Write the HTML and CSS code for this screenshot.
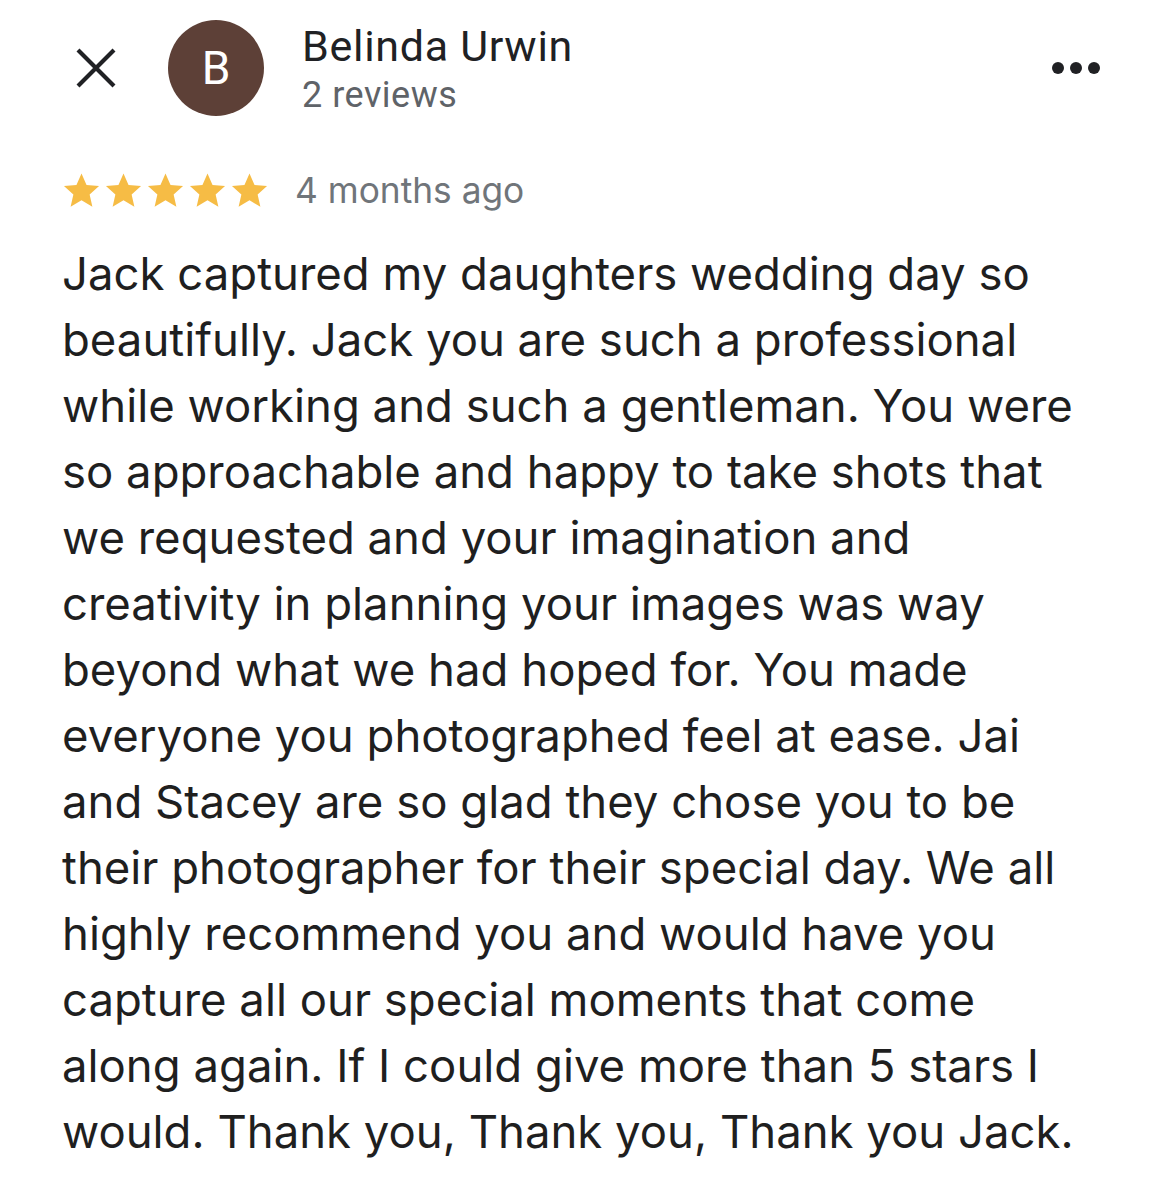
FILE: index.html
```html
<!DOCTYPE html>
<html>
<head>
<meta charset="utf-8">
<link rel="stylesheet" href="styles.css">
</head>
<body>
<div class="page">
  <header class="head">
    <div class="close">
      <svg width="44" height="44" viewBox="0 0 44 44"><path d="M4 4 L40 40 M40 4 L4 40" stroke="#202124" stroke-width="4.2" fill="none"/></svg>
    </div>
    <div class="avatar">B</div>
    <div class="who">
      <div class="name">Belinda Urwin</div>
      <div class="count">2 reviews</div>
    </div>
    <div class="more"><span></span><span></span><span></span></div>
  </header>
  <div class="meta">
    <div class="stars">
      <svg viewBox="0 0 24 24"><path d="M12 1.5l3.1 7.1 7.7.7-5.8 5.1 1.7 7.6L12 18l-6.7 4 1.7-7.6L1.2 9.3l7.7-.7z"/></svg>
      <svg viewBox="0 0 24 24"><path d="M12 1.5l3.1 7.1 7.7.7-5.8 5.1 1.7 7.6L12 18l-6.7 4 1.7-7.6L1.2 9.3l7.7-.7z"/></svg>
      <svg viewBox="0 0 24 24"><path d="M12 1.5l3.1 7.1 7.7.7-5.8 5.1 1.7 7.6L12 18l-6.7 4 1.7-7.6L1.2 9.3l7.7-.7z"/></svg>
      <svg viewBox="0 0 24 24"><path d="M12 1.5l3.1 7.1 7.7.7-5.8 5.1 1.7 7.6L12 18l-6.7 4 1.7-7.6L1.2 9.3l7.7-.7z"/></svg>
      <svg viewBox="0 0 24 24"><path d="M12 1.5l3.1 7.1 7.7.7-5.8 5.1 1.7 7.6L12 18l-6.7 4 1.7-7.6L1.2 9.3l7.7-.7z"/></svg>
    </div>
    <span class="ago">4 months ago</span>
  </div>
  <p class="text">Jack captured my daughters wedding day so<br>beautifully. Jack you are such a professional<br>while working and such a gentleman. You were<br>so approachable and happy to take shots that<br>we requested and your imagination and<br>creativity in planning your images was way<br>beyond what we had hoped for. You made<br>everyone you photographed feel at ease. Jai<br>and Stacey are so glad they chose you to be<br>their photographer for their special day. We all<br>highly recommend you and would have you<br>capture all our special moments that come<br>along again. If I could give more than 5 stars I<br>would. Thank you, Thank you, Thank you Jack.</p>
</div>
</body>
</html>
```
FILE: styles.css
```css
html, body {
  margin: 0;
  padding: 0;
  background: #ffffff;
}
.page {
  width: 1170px;
  height: 1178px;
  overflow: hidden;
  box-sizing: border-box;
  padding: 20px 0 0 0;
}
.head {
  display: flex;
  align-items: center;
  height: 96px;
  padding-left: 74px;
  padding-right: 70px;
}
.close {
  width: 44px;
  height: 44px;
  display: flex;
  margin-right: 50px;
}
.avatar {
  width: 96px;
  height: 96px;
  border-radius: 50%;
  background: #5d4037;
  color: #ffffff;
  font-family: Roboto, "Noto Sans", sans-serif;
  font-size: 46px;
  display: flex;
  align-items: center;
  justify-content: center;
  margin-right: 38px;
}
.who {
  flex: 1;
  align-self: flex-start;
  display: flex;
  flex-direction: column;
  margin-top: 3px;
}
.name {
  font-family: Roboto, "Noto Sans", sans-serif;
  font-size: 43px;
  letter-spacing: 0.7px;
  color: #202124;
  line-height: 46px;
}
.count {
  font-family: Roboto, "Noto Sans", sans-serif;
  font-size: 36px;
  letter-spacing: 0.5px;
  color: #5f6368;
  line-height: 52px;
}
.more {
  display: flex;
  gap: 6px;
  margin-top: 0px;
}
.more span {
  width: 12px;
  height: 12px;
  border-radius: 50%;
  background: #202124;
}
.meta {
  display: flex;
  align-items: center;
  padding-left: 62px;
  margin-top: 52px;
  height: 44px;
}
.stars {
  display: flex;
  gap: 3px;
  margin-right: 26px;
}
.stars svg {
  width: 39px;
  height: 39px;
  fill: #f6bc45;
}
.ago {
  font-family: Inter, "Noto Sans", sans-serif;
  font-size: 35.3px;
  color: #70757a;
}
.text {
  margin: 29px 0 0 62px;
  font-family: Inter, "Noto Sans", sans-serif;
  font-size: 45.5px;
  line-height: 66px;
  color: #1f1f1f;
  white-space: nowrap;
}
```
